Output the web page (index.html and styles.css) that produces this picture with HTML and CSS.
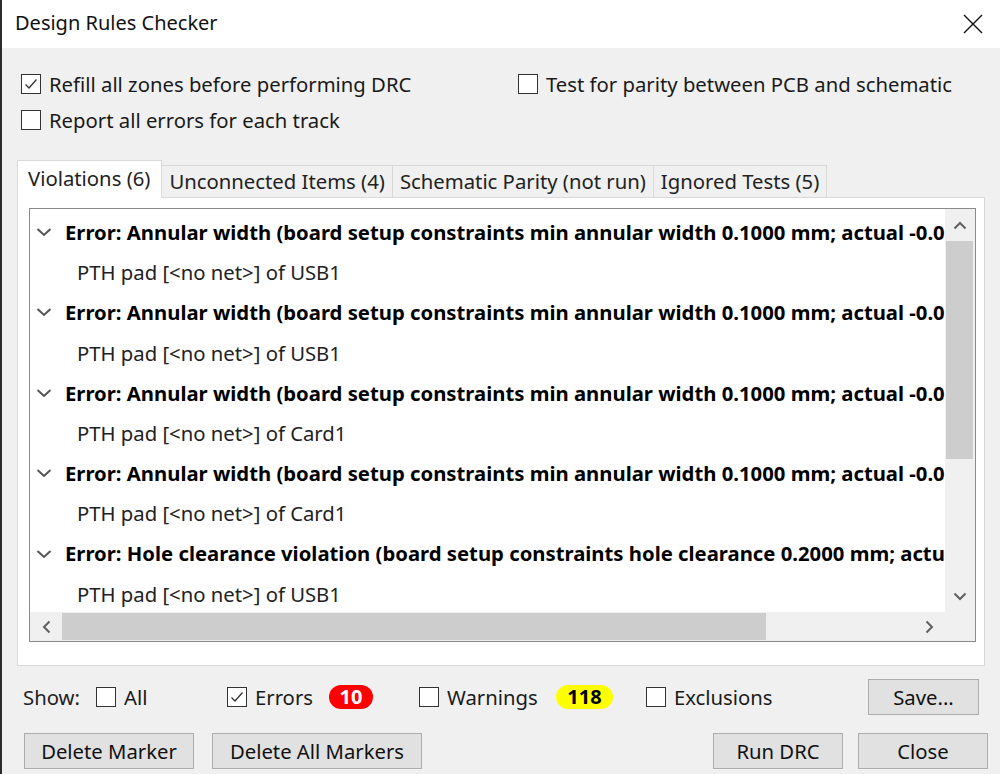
FILE: index.html
```html
<!DOCTYPE html>
<html>
<head>
<meta charset="utf-8">
<title>Design Rules Checker</title>
<link rel="stylesheet" href="styles.css">
</head>
<body>
<div class="window">
  <div class="titlebar">
    <span class="title">Design Rules Checker</span>
    <svg class="close" width="20" height="20" viewBox="0 0 20 20"><path d="M1 1L19 19M19 1L1 19" stroke="#111" stroke-width="1.4" fill="none"/></svg>
  </div>

  <div class="options">
    <label class="cb"><span class="box"><svg width="16" height="16" viewBox="0 0 16 16"><path d="M2.5 8.5L6 12L13.5 3.5" stroke="#333" stroke-width="1.3" fill="none"/></svg></span>Refill all zones before performing DRC</label>
    <label class="cb"><span class="box"></span>Test for parity between PCB and schematic</label>
    <label class="cb"><span class="box"></span>Report all errors for each track</label>
  </div>

  <div class="notebook">
    <div class="tabs">
      <div class="tab active">Violations (6)</div>
      <div class="tab">Unconnected Items (4)</div>
      <div class="tab">Schematic Parity (not run)</div>
      <div class="tab">Ignored Tests (5)</div>
    </div>
    <div class="panel">
      <div class="list">
        <div class="rows">
          <div class="row err"><svg class="chev" width="16" height="10" viewBox="0 0 16 10"><path d="M1.5 2L8 8L14.5 2" stroke="#555" stroke-width="2" fill="none"/></svg>Error: Annular width (board setup constraints min annular width 0.1000 mm; actual -0.0500 mm)</div>
          <div class="row item">PTH pad [&lt;no net&gt;] of USB1</div>
          <div class="row err"><svg class="chev" width="16" height="10" viewBox="0 0 16 10"><path d="M1.5 2L8 8L14.5 2" stroke="#555" stroke-width="2" fill="none"/></svg>Error: Annular width (board setup constraints min annular width 0.1000 mm; actual -0.0500 mm)</div>
          <div class="row item">PTH pad [&lt;no net&gt;] of USB1</div>
          <div class="row err"><svg class="chev" width="16" height="10" viewBox="0 0 16 10"><path d="M1.5 2L8 8L14.5 2" stroke="#555" stroke-width="2" fill="none"/></svg>Error: Annular width (board setup constraints min annular width 0.1000 mm; actual -0.0500 mm)</div>
          <div class="row item">PTH pad [&lt;no net&gt;] of Card1</div>
          <div class="row err"><svg class="chev" width="16" height="10" viewBox="0 0 16 10"><path d="M1.5 2L8 8L14.5 2" stroke="#555" stroke-width="2" fill="none"/></svg>Error: Annular width (board setup constraints min annular width 0.1000 mm; actual -0.0500 mm)</div>
          <div class="row item">PTH pad [&lt;no net&gt;] of Card1</div>
          <div class="row err"><svg class="chev" width="16" height="10" viewBox="0 0 16 10"><path d="M1.5 2L8 8L14.5 2" stroke="#555" stroke-width="2" fill="none"/></svg>Error: Hole clearance violation (board setup constraints hole clearance 0.2000 mm; actual 0.1500 mm)</div>
          <div class="row item">PTH pad [&lt;no net&gt;] of USB1</div>
          <div class="row err"><svg class="chev" width="16" height="10" viewBox="0 0 16 10"><path d="M1.5 2L8 8L14.5 2" stroke="#555" stroke-width="2" fill="none"/></svg>Error: Hole clearance violation (board setup constraints hole clearance 0.2000 mm; actual 0.1500 mm)</div>
        </div>
        <div class="vscroll">
          <div class="arrow"><svg width="14" height="9" viewBox="0 0 14 9"><path d="M1.5 7.5L7 2L12.5 7.5" stroke="#606060" stroke-width="2" fill="none"/></svg></div>
          <div class="vtrack"><div class="vthumb"></div></div>
          <div class="arrow"><svg width="14" height="9" viewBox="0 0 14 9"><path d="M1.5 1.5L7 7L12.5 1.5" stroke="#606060" stroke-width="2" fill="none"/></svg></div>
        </div>
        <div class="hscroll">
          <div class="arrow"><svg width="9" height="14" viewBox="0 0 9 14"><path d="M7.5 1.5L2 7L7.5 12.5" stroke="#606060" stroke-width="2" fill="none"/></svg></div>
          <div class="htrack"><div class="hthumb"></div></div>
          <div class="arrow"><svg width="9" height="14" viewBox="0 0 9 14"><path d="M1.5 1.5L7 7L1.5 12.5" stroke="#606060" stroke-width="2" fill="none"/></svg></div>
        </div>
        <div class="corner"></div>
      </div>
    </div>
  </div>

  <div class="showbar">
    <span class="showlabel">Show:</span>
    <label class="cb g-all"><span class="box"></span>All</label>
    <label class="cb g-err"><span class="box"><svg width="16" height="16" viewBox="0 0 16 16"><path d="M2.5 8.5L6 12L13.5 3.5" stroke="#333" stroke-width="1.3" fill="none"/></svg></span><span class="lbl-err">Errors</span><span class="badge red">10</span></label>
    <label class="cb g-warn"><span class="box"></span><span class="lbl-warn">Warnings</span><span class="badge yellow">118</span></label>
    <label class="cb g-excl"><span class="box"></span>Exclusions</label>
    <button class="btn save">Save...</button>
  </div>

  <div class="buttons">
    <button class="btn w170">Delete Marker</button>
    <button class="btn w210">Delete All Markers</button>
    <span class="spacer"></span>
    <button class="btn w130">Run DRC</button>
    <button class="btn w130">Close</button>
  </div>
</div>
</body>
</html>
```

FILE: styles.css
```css
* { box-sizing: border-box; }
html, body { margin: 0; padding: 0; }
body {
  width: 1000px;
  height: 774px;
  overflow: hidden;
  background: #f0f0f0;
  color: #000;
  font-family: "Noto Sans", "Open Sans", sans-serif;
  font-size: 20.3px;
}
.window {
  height: 774px;
  border-left: 2px solid #2b2b2b;
  background: #f0f0f0;
  display: flex;
  flex-direction: column;
}
.titlebar {
  flex: none;
  height: 48px;
  background: #fff;
  display: flex;
  align-items: center;
  justify-content: space-between;
  padding: 0 17px 2px 13px;
}
.title { font-size: 20px; line-height: 1; color: #111; }
.close { display: block; margin-top: 2px; }

.options {
  display: grid;
  grid-template-columns: 497px auto;
  grid-template-rows: 36px 36px;
  margin: 18px 0 0 19px;
}
.cb {
  display: flex;
  align-items: center;
  gap: 8px;
  line-height: 1;
  white-space: nowrap;
  color: #1a1a1a;
}
.box {
  flex: none;
  width: 20px;
  height: 20px;
  border: 1px solid #333;
  background: #fff;
  display: flex;
  align-items: center;
  justify-content: center;
}
.box svg { display: block; }

.notebook { margin: 22px 0 0 15px; width: 968px; }
.tabs {
  display: flex;
  align-items: flex-end;
  height: 37px;
  position: relative;
  z-index: 1;
}
.tab {
  height: 32px;
  padding: 0 7px;
  display: flex;
  align-items: center;
  border: 1px solid #d9d9d9;
  border-bottom: none;
  border-left: none;
  background: #f0f0f0;
  color: #222;
  white-space: nowrap;
  line-height: 1;
}
.tab.active {
  height: 38px;
  margin-bottom: -1px;
  padding: 0 11px 3px 10px;
  border-left: 1px solid #d9d9d9;
  background: #fff;
}
.panel {
  height: 469px;
  border: 1px solid #d9d9d9;
  background: #fff;
  padding: 10px 0 0 11px;
}
.list {
  width: 947px;
  height: 434px;
  border: 1px solid #8a8a8a;
  display: grid;
  grid-template-columns: 1fr 30px;
  grid-template-rows: 1fr 29px;
  background: #fff;
}
.rows {
  overflow: hidden;
  padding-top: 3px;
}
.row {
  height: 40.2px;
  display: flex;
  align-items: center;
  white-space: nowrap;
  line-height: 1;
}
.row.err {
  font-weight: bold;
  padding-left: 6px;
  color: #000;
}
.chev { flex: none; margin-right: 13px; }
.row.item { padding-left: 47px; color: #222; }

.vscroll, .hscroll { background: #f0f0f0; display: flex; }
.vscroll { flex-direction: column; }
.arrow {
  flex: none;
  width: 32px;
  height: 32px;
  display: flex;
  align-items: center;
  justify-content: center;
}
.vscroll .arrow { width: 100%; }
.hscroll .arrow { height: 100%; }
.vtrack { flex: 1; padding: 0 2px 0 1px; }
.vthumb { height: 218px; background: #cdcdcd; }
.htrack { flex: 1; padding: 1px 0 1px 0; }
.hthumb { width: 704px; height: 100%; background: #cdcdcd; }
.corner { background: #f0f0f0; }

.showbar {
  display: flex;
  align-items: center;
  height: 36px;
  margin-top: 13px;
  padding: 0 21px 0 21px;
}
.showlabel { width: 73px; color: #222; line-height: 1; }
.g-all { width: 131px; }
.g-err { width: 192px; }
.g-warn { width: 227px; }
.g-excl { flex: 1; }
.lbl-err { width: 66px; }
.lbl-warn { width: 101px; }
.badge {
  font-weight: bold;
  border-radius: 12px;
  height: 24px;
  display: flex;
  align-items: center;
  justify-content: center;
  line-height: 1;
  font-size: 20px;
}
.badge.red { width: 44px; background: #f00; color: #fff; }
.badge.yellow { width: 57px; background: #ff0; color: #000; }

.btn {
  height: 36px;
  border: 1px solid #adadad;
  background: #e1e1e1;
  font-family: inherit;
  font-size: 20.3px;
  color: #111;
  padding: 0;
  line-height: 1;
}
.save { width: 111px; }
.buttons {
  display: flex;
  align-items: center;
  margin-top: 18px;
  padding: 0 12px 0 22px;
}
.w170 { width: 170px; }
.w210 { width: 210px; margin-left: 18px; }
.w130 { width: 130px; }
.w130 + .w130 { margin-left: 15px; }
.spacer { flex: 1; }
```
